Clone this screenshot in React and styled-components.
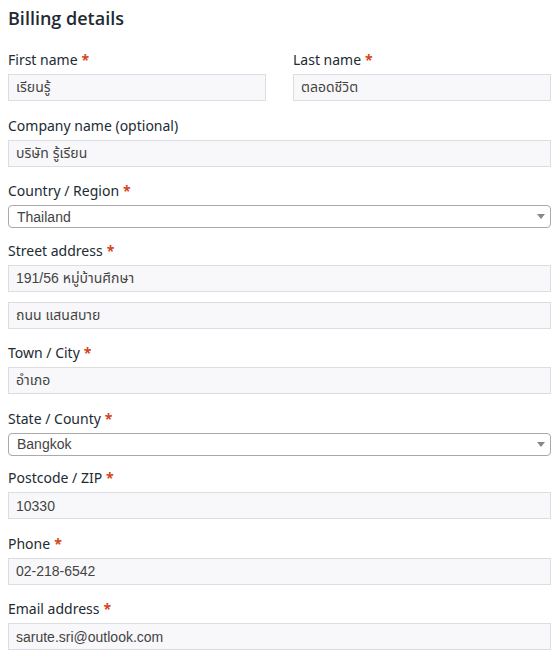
import React from 'react';
import styled, { createGlobalStyle } from 'styled-components';

const GlobalStyle = createGlobalStyle`
  body {
    margin: 0;
    background: #fff;
    font-family: "Noto Sans", "Open Sans", sans-serif;
  }
`;

const Page = styled.div`
  width: 543px;
  padding: 6px 0 0 8px;
`;

const Heading = styled.h3`
  margin: 0 0 20px;
  font-family: "Open Sans", "Noto Sans", sans-serif;
  font-size: 18px;
  line-height: 24px;
  font-weight: 600;
  color: #1f2a33;
`;

const Grid = styled.div`
  display: grid;
  grid-template-columns: 1fr 1fr;
  column-gap: 27px;
`;

const Row = styled.div`
  grid-column: ${(p) => (p.$half ? 'auto' : '1 / -1')};
  padding-bottom: ${(p) => (p.$tight ? '10.5px' : '14.5px')};
`;

const Label = styled.label`
  display: block;
  font-size: 14px;
  line-height: 20px;
  color: #222b33;
  margin-bottom: 4px;
`;

const Required = styled.span`
  color: #d5441c;
  font-weight: 700;
  margin-left: 4px;
`;

const Input = styled.input`
  box-sizing: border-box;
  display: block;
  width: 100%;
  height: 27px;
  padding: 0 7px;
  border: 1px solid #dcdde3;
  background: #f8f8fa;
  font-family: "Liberation Sans", "Noto Sans Thai", "DejaVu Sans", sans-serif;
  font-size: 14px;
  color: #444;
  outline: none;
`;

const SelectBox = styled.div`
  box-sizing: border-box;
  display: flex;
  align-items: center;
  justify-content: space-between;
  height: 23px;
  margin: 2px 0;
  padding: 0 5px 0 8px;
  border: 1px solid #aaa;
  border-radius: 4px;
  background: #fff;
  font-family: "Liberation Sans", sans-serif;
  font-size: 14px;
  color: #444;
`;

const Arrow = styled.span`
  width: 0;
  height: 0;
  border-left: 4px solid transparent;
  border-right: 4px solid transparent;
  border-top: 5px solid #888;
`;

const Field = ({ label, value, half, optional }) => (
  <Row $half={half}>
    <Label>
      {label}
      {!optional && <Required>*</Required>}
    </Label>
    <Input readOnly value={value} />
  </Row>
);

const SelectField = ({ label, value }) => (
  <Row $tight>
    <Label>
      {label}
      <Required>*</Required>
    </Label>
    <SelectBox>
      <span>{value}</span>
      <Arrow />
    </SelectBox>
  </Row>
);

const StreetInput = styled(Input)`
  margin-bottom: 10px;
`;

export default function App() {
  return (
    <Page>
      <GlobalStyle />
      <Heading>Billing details</Heading>
      <Grid>
        <Field half label="First name" value="เรียนรู้" />
        <Field half label="Last name" value="ตลอดชีวิต" />
        <Field optional label="Company name (optional)" value="บริษัท รู้เรียน" />
        <SelectField label="Country / Region" value="Thailand" />
        <Row>
          <Label>
            Street address<Required>*</Required>
          </Label>
          <StreetInput readOnly value="191/56 หมู่บ้านศึกษา" />
          <Input readOnly value="ถนน แสนสบาย" />
        </Row>
        <Field label="Town / City" value="อำเภอ" />
        <SelectField label="State / County" value="Bangkok" />
        <Field label="Postcode / ZIP" value="10330" />
        <Field label="Phone" value="02-218-6542" />
        <Field label="Email address" value="sarute.sri@outlook.com" />
      </Grid>
    </Page>
  );
}
